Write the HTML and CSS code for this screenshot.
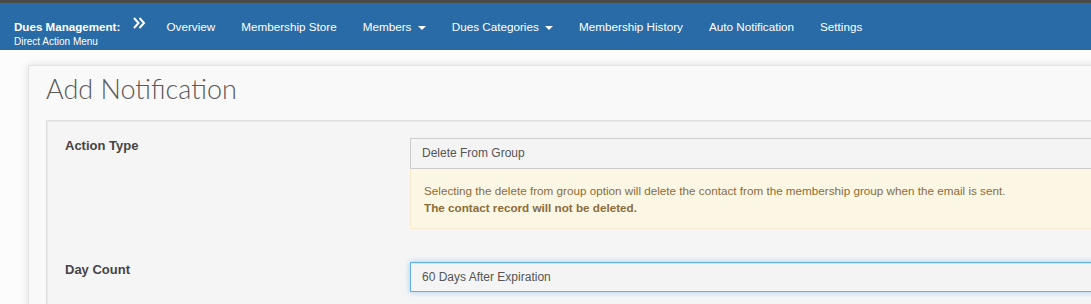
FILE: index.html
```html
<!DOCTYPE html>
<html lang="en">
<head>
    <meta charset="UTF-8">
    <meta name="viewport" content="width=device-width, initial-scale=1.0">
    <title>Add Notification</title>
    <link rel="stylesheet" href="styles.css">
</head>
<body>
    <div class="top-strip"></div>
    <nav class="navbar">
        <div class="brand">
            <div class="brand-title">Dues Management:
                <svg class="brand-icon" width="13" height="12" viewBox="0 0 13 12">
                    <path d="M1 1 L5.5 6 L1 11 M6.5 1 L11 6 L6.5 11" fill="none" stroke="#ffffff" stroke-width="2"/>
                </svg>
            </div>
            <div class="brand-sub">Direct Action Menu</div>
        </div>
        <ul class="nav-links">
            <li>Overview</li>
            <li>Membership Store</li>
            <li>Members <span class="caret"></span></li>
            <li>Dues Categories <span class="caret"></span></li>
            <li>Membership History</li>
            <li>Auto Notification</li>
            <li>Settings</li>
        </ul>
    </nav>

    <main class="page">
        <section class="card">
            <h1>Add Notification</h1>
            <div class="panel">
                <div class="form-row">
                    <label class="form-label">Action Type</label>
                    <div class="form-field">
                        <div class="form-control">Delete From Group</div>
                        <div class="alert">
                            Selecting the delete from group option will delete the contact from the membership group when the email is sent.<br>
                            <strong>The contact record will not be deleted.</strong>
                        </div>
                    </div>
                </div>
                <div class="form-row day-row">
                    <label class="form-label">Day Count</label>
                    <div class="form-field">
                        <div class="form-control focused">60 Days After Expiration</div>
                    </div>
                </div>
            </div>
        </section>
    </main>
</body>
</html>
```

FILE: styles.css
```css
body {
    margin: 0;
    background-color: #fcfcfc;
    font-family: "Liberation Sans", Arial, Helvetica, sans-serif;
    overflow: hidden;
}

.top-strip {
    height: 3px;
    background-color: #4b4b4b;
}

.navbar {
    display: flex;
    align-items: stretch;
    height: 47px;
    background-color: #296ba7;
    color: #ffffff;
}

.brand {
    padding: 14px 0 0 14px;
    margin-right: 8px;
}

.brand-title {
    font-size: 11.6px;
    font-weight: bold;
    line-height: 19px;
    white-space: nowrap;
}

.brand-icon {
    vertical-align: 2px;
    margin-left: 9px;
}

.brand-sub {
    font-size: 10px;
    line-height: 12px;
}

.nav-links {
    display: flex;
    align-items: center;
    list-style: none;
    margin: 0;
    padding: 0;
}

.nav-links li {
    font-size: 11.7px;
    padding: 0 13px;
    white-space: nowrap;
}

.caret {
    display: inline-block;
    width: 0;
    height: 0;
    margin-left: 3px;
    vertical-align: middle;
    border-top: 4px solid #ffffff;
    border-left: 4px solid transparent;
    border-right: 4px solid transparent;
}

.page {
    padding: 15px 0 0 28px;
}

.card {
    width: 1120px;
    height: 300px;
    background-color: #f9f9f9;
    border: 1px solid #e2e2e2;
    box-shadow: 0 0 8px rgba(0, 0, 0, 0.12);
    padding: 6px 17px 0;
}

.card h1 {
    margin: 0 0 15px;
    font-family: Lato, "Open Sans", sans-serif;
    font-weight: 300;
    font-size: 27px;
    line-height: 33px;
    color: #5a5a5a;
}

.panel {
    background-color: #f5f5f5;
    border: 1px solid #dedede;
    box-shadow: inset 1px 1px 0 #ebebeb;
    padding: 17px 0 0 18px;
    height: 300px;
}

.form-row {
    display: flex;
    align-items: flex-start;
}

.day-row {
    margin-top: 33px;
}

.form-label {
    width: 345px;
    flex-shrink: 0;
    font-size: 13px;
    font-weight: bold;
    line-height: 16px;
    color: #444444;
}

.form-field {
    flex: 1;
}

.form-control {
    height: 29px;
    line-height: 29px;
    padding-left: 11px;
    border: 1px solid #cccccc;
    background-color: #f4f4f4;
    font-size: 12px;
    color: #555555;
}

.form-control.focused {
    height: 28px;
    line-height: 28px;
    border-color: #66afe9;
    box-shadow: inset 0 1px 1px rgba(0, 0, 0, 0.075), 0 0 6px rgba(102, 175, 233, 0.6);
}

.alert {
    background-color: #fcf7e4;
    border: 1px solid #faebcc;
    border-top: none;
    padding: 13px 13px 12px;
    font-size: 11.7px;
    line-height: 17px;
    color: #8a6d3b;
}
```
